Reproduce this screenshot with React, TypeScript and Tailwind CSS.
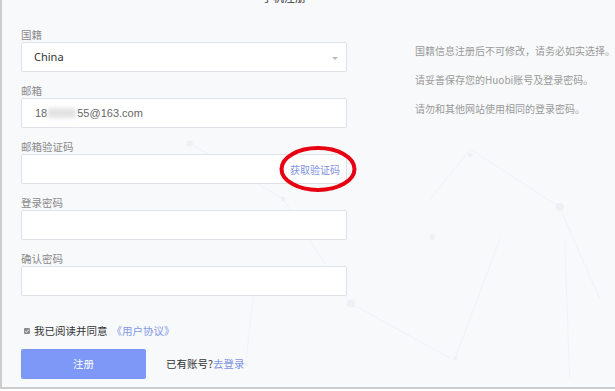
import React from 'react';

const cjk = { fontFamily: '"Noto Sans CJK SC", "Noto Sans", sans-serif' };

interface FieldProps {
  label: string;
  children?: React.ReactNode;
}

function Field({ label, children }: FieldProps) {
  return (
    <div className="flex flex-col">
      <div className="h-[14px] text-[10.5px] leading-[14px] text-[#8a8a8a]">{label}</div>
      <div className="relative flex h-[30px] items-center rounded-[2px] border border-[#dfe2e8] bg-white">
        {children}
      </div>
    </div>
  );
}

function Backdrop() {
  // faint network pattern behind the form
  return (
    <svg className="pointer-events-none absolute inset-0 h-full w-full" viewBox="0 0 615 389">
      <g stroke="#f1f2f6" strokeWidth="1" fill="none">
        <line x1="188" y1="144" x2="282" y2="200" />
        <line x1="282" y1="200" x2="350" y2="305" />
        <line x1="350" y1="305" x2="450" y2="360" />
        <line x1="430" y1="200" x2="470" y2="150" />
        <line x1="470" y1="150" x2="560" y2="208" />
        <line x1="560" y1="208" x2="600" y2="300" />
        <line x1="245" y1="360" x2="255" y2="270" />
        <line x1="500" y1="240" x2="455" y2="360" />
        <line x1="565" y1="240" x2="570" y2="380" />
      </g>
      <g fill="#edf0f6">
        <circle cx="188" cy="144" r="3" />
        <circle cx="282" cy="200" r="2.5" />
        <circle cx="350" cy="305" r="4" />
        <circle cx="432" cy="238" r="3" />
        <circle cx="470" cy="156" r="2.5" />
        <circle cx="560" cy="208" r="4" />
        <circle cx="455" cy="360" r="2" />
        <circle cx="245" cy="366" r="2" />
      </g>
    </svg>
  );
}

export default function App() {
  return (
    <div className="h-[391px] w-[615px] bg-white" style={cjk}>
      <div className="relative h-[389px] w-[615px] overflow-hidden border-b-2 border-l-2 border-[#cdcdcd] bg-[#f8f9fb]">
        <Backdrop />
        <div className="relative flex">
          {/* 左侧表单 */}
          <div className="ml-[19px] flex w-[326px] flex-col">
            <div className="flex h-[28px]">
              <div className="-mt-[10px] ml-[241px] text-[11px] leading-[14px] text-[#333]">手机注册</div>
            </div>

            <div className="flex flex-col gap-[12px]">
              <Field label="国籍">
                <span className="pl-[12px] text-[11px] text-[#333]" style={{ fontFamily: '"Noto Sans", sans-serif' }}>
                  China
                </span>
                <span className="absolute right-[8px] top-[14px] h-0 w-0 border-x-[3px] border-t-[3px] border-x-transparent border-t-[#b8b8b8]" />
              </Field>
              <Field label="邮箱">
                <span
                  className="flex items-center pl-[13px] text-[11px] text-[#666]"
                  style={{ fontFamily: '"Liberation Sans", Arial, sans-serif' }}
                >
                  18
                  <span className="mx-[1px] inline-block h-[10px] w-[28px] bg-[#e2e2e2] blur-[2px]" />
                  55@163.com
                </span>
              </Field>
              <Field label="邮箱验证码">
                <span className="absolute right-[6px] text-[10px] text-[#7f94e4]">获取验证码</span>
                <svg className="pointer-events-none absolute -top-[10px] left-[256px] h-[48px] w-[80px]" viewBox="0 0 80 48">
                  <ellipse cx="40" cy="24" rx="36.5" ry="21" fill="none" stroke="#e60012" strokeWidth="4" />
                </svg>
              </Field>
              <Field label="登录密码" />
              <Field label="确认密码" />
            </div>

            <div className="mt-[28px] flex h-[14px] items-center text-[10.5px] leading-[14px]">
              <span className="relative ml-[3px] flex h-[6px] w-[6px] items-center justify-center rounded-[1px] bg-[#8c8c8c]">
                <svg viewBox="0 0 6 6" className="h-[6px] w-[6px]">
                  <path d="M1.2 3.1 L2.5 4.3 L4.9 1.6" stroke="#fff" strokeWidth="0.9" fill="none" />
                </svg>
              </span>
              <span className="ml-[4px] text-[#333]">我已阅读并同意</span>
              <span className="ml-[4px] text-[#8498e6]">《用户协议》</span>
            </div>

            <div className="mt-[11px] flex items-center">
              <div className="flex h-[30px] w-[125px] items-center justify-center rounded-[2px] bg-[#7d98f6] text-[10.5px] text-white">
                注册
              </div>
              <div className="ml-[20px] text-[10.5px] text-[#333]">
                已有账号?<span className="text-[#7f94e4]">去登录</span>
              </div>
            </div>
          </div>

          {/* 右侧提示 */}
          <div className="ml-[68px] flex flex-col gap-[15px] pt-[44px] text-[10px] leading-[14px] text-[#999]">
            <div>国籍信息注册后不可修改，请务必如实选择。</div>
            <div>请妥善保存您的Huobi账号及登录密码。</div>
            <div>请勿和其他网站使用相同的登录密码。</div>
          </div>
        </div>
      </div>
    </div>
  );
}
